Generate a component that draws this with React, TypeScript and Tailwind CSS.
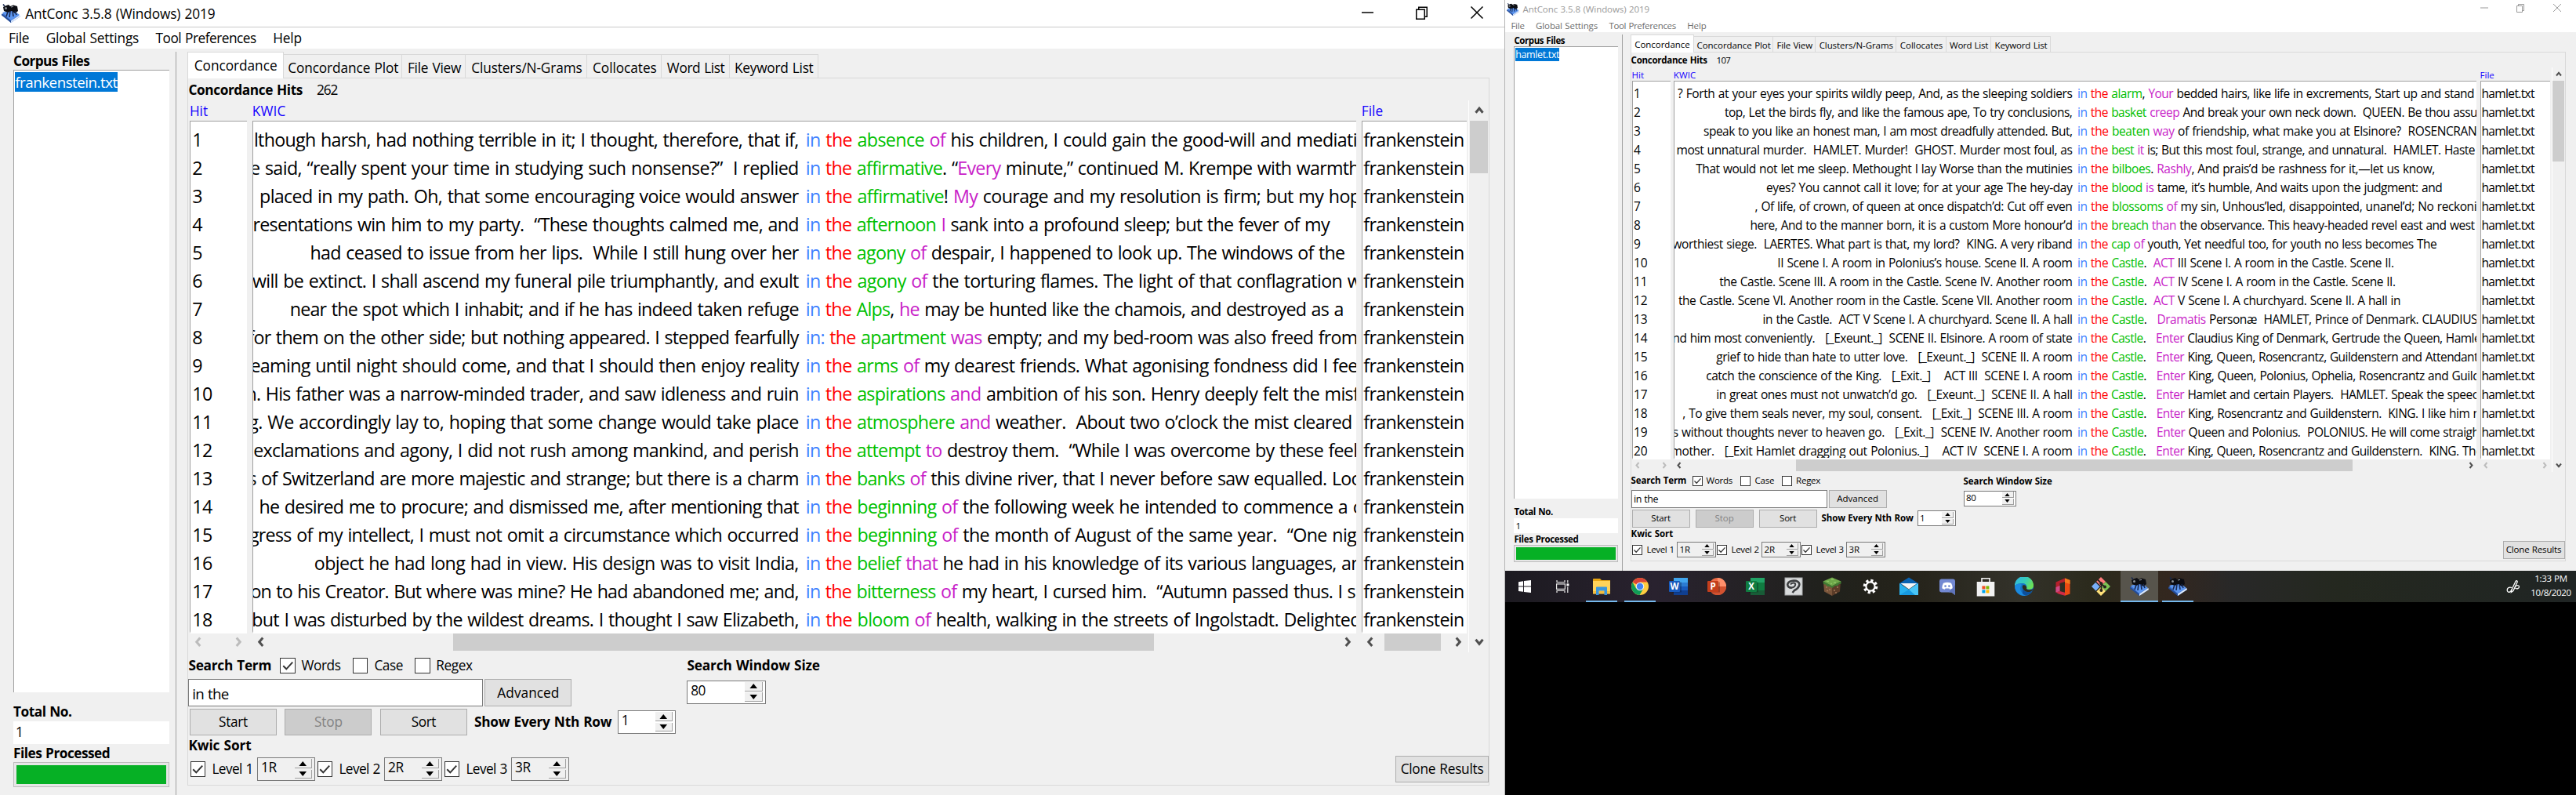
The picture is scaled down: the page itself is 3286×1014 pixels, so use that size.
import { useLayoutEffect, useRef, type ReactNode } from "react";

type Hit = [left: string, start: number, word: string, gap: string, next: string, rest: string, end: number, first?: string];

const FRANKENSTEIN: Hit[] = [
  ["lthough harsh, had nothing terrible in it; I thought, therefore, that if,", 216, "absence", " ", "of", " his children, I could gain the good-will and mediati", 1154],
  ["e said, “really spent your time in studying such nonsense?”  I replied", 212.7, "affirmative", ". “", "Every", " minute,” continued M. Krempe with warmth", 1156],
  ["placed in my path. Oh, that some encouraging voice would answer", 220.8, "affirmative", "! ", "My", " courage and my resolution is firm; but my hop", 1157],
  ["resentations win him to my party.  “These thoughts calmed me, and", 215, "afternoon", " ", "I", " sank into a profound sleep; but the fever of my", 1130.6],
  ["had ceased to issue from her lips.  While I still hung over her", 263.7, "agony", " ", "of", " despair, I happened to look up. The windows of the", 1143.7],
  ["will be extinct. I shall ascend my funeral pile triumphantly, and exult", 214.7, "agony", " ", "of", " the torturing flames. The light of that conflagration w", 1157.5],
  ["near the spot which I inhabit; and if he has indeed taken refuge", 246.5, "Alps", ", ", "he", " may be hunted like the chamois, and destroyed as a", 1142.5],
  ["for them on the other side; but nothing appeared. I stepped fearfully", 211, "apartment", " ", "was", " empty; and my bed-room was also freed from", 1154.5, "in: "],
  ["eaming until night should come, and that I should then enjoy reality", 213, "arms", " ", "of", " my dearest friends. What agonising fondness did I fee", 1154.5],
  ["n. His father was a narrow-minded trader, and saw idleness and ruin", 209, "aspirations", " ", "and", " ambition of his son. Henry deeply felt the misf", 1155.5],
  ["g. We accordingly lay to, hoping that some change would take place", 211.5, "atmosphere", " ", "and", " weather.  About two o’clock the mist cleared", 1149.8],
  ["exclamations and agony, I did not rush among mankind, and perish", 215.5, "attempt", " ", "to", " destroy them.  “While I was overcome by these feel", 1154.3],
  ["s of Switzerland are more majestic and strange; but there is a charm", 211, "banks", " ", "of", " this divine river, that I never before saw equalled. Loo", 1158],
  ["he desired me to procure; and dismissed me, after mentioning that", 220.4, "beginning", " ", "of", " the following week he intended to commence a c", 1157.5],
  ["gress of my intellect, I must not omit a circumstance which occurred", 212, "beginning", " ", "of", " the month of August of the same year.  “One nig", 1153.5],
  ["object he had long had in view. His design was to visit India,", 267.3, "belief", " ", "that", " he had in his knowledge of its various languages, an", 1158],
  ["on to his Creator. But where was mine? He had abandoned me; and,", 213, "bitterness", " ", "of", " my heart, I cursed him.  “Autumn passed thus. I s", 1152.7],
  ["but I was disturbed by the wildest dreams. I thought I saw Elizabeth,", 214.3, "bloom", " ", "of", " health, walking in the streets of Ingolstadt. Delighted", 1157.3],
];

const HAMLET: Hit[] = [
  ["? Forth at your eyes your spirits wildly peep, And, as the sleeping soldiers", 219.5, "alarm", ", ", "Your", " bedded hairs, like life in excrements, Start up and stand", 1235.5],
  ["top, Let the birds fly, and like the famous ape, To try conclusions,", 279.3, "basket", " ", "creep", " And break your own neck down.  QUEEN. Be thou assu", 1239.5],
  ["speak to you like an honest man, I am most dreadfully attended. But,", 252.5, "beaten", " ", "way", " of friendship, what make you at Elsinore?  ROSENCRAN", 1238.6],
  ["most unnatural murder.  HAMLET. Murder!  GHOST. Murder most foul, as", 218, "best", " ", "it", " is; But this most foul, strange, and unnatural.  HAMLET. Haste", 1236.4],
  ["That would not let me sleep. Methought I lay Worse than the mutinies", 242.7, "bilboes", ". ", "Rashly", ", And prais’d be rashness for it,—let us know,", 1185.3],
  ["eyes? You cannot call it love; for at your age The hey-day", 332.4, "blood", " ", "is", " tame, it’s humble, And waits upon the judgment: and", 1194.7],
  [", Of life, of crown, of queen at once dispatch’d: Cut off even", 318, "blossoms", " ", "of", " my sin, Unhous’led, disappointed, unanel’d; No reckoni", 1238.6],
  ["here, And to the manner born, it is a custom More honour’d", 312, "breach", " ", "than", " the observance. This heavy-headed revel east and west", 1236],
  ["worthiest siege.  LAERTES. What part is that, my lord?  KING. A very riband", 212.8, "cap", " ", "of", " youth, Yet needful too, for youth no less becomes The", 1187.6],
  ["II Scene I. A room in Polonius’s house. Scene II. A room", 346.7, "Castle", ".  ", "ACT", " III Scene I. A room in the Castle. Scene II.", 1133],
  ["the Castle. Scene III. A room in the Castle. Scene IV. Another room", 272.6, "Castle", ".  ", "ACT", " IV Scene I. A room in the Castle. Scene II.", 1135],
  ["the Castle. Scene VI. Another room in the Castle. Scene VII. Another room", 220.4, "Castle", ".  ", "ACT", " V Scene I. A churchyard. Scene II. A hall in", 1141.4],
  ["in the Castle.  ACT V Scene I. A churchyard. Scene II. A hall", 328, "Castle", ".   ", "Dramatis", " Personæ  HAMLET, Prince of Denmark. CLAUDIUS", 1239.5],
  ["nd him most conveniently.   [_Exeunt._]  SCENE II. Elsinore. A room of state", 212.8, "Castle", ".   ", "Enter", " Claudius King of Denmark, Gertrude the Queen, Hamle", 1243.6],
  ["grief to hide than hate to utter love.   [_Exeunt._]  SCENE II. A room", 268.6, "Castle", ".   ", "Enter", " King, Queen, Rosencrantz, Guildenstern and Attendant", 1240.5],
  ["catch the conscience of the King.   [_Exit._]    ACT III  SCENE I. A room", 255.6, "Castle", ".   ", "Enter", " King, Queen, Polonius, Ophelia, Rosencrantz and Guild", 1242.6],
  ["in great ones must not unwatch’d go.   [_Exeunt._]  SCENE II. A hall", 268.6, "Castle", ".   ", "Enter", " Hamlet and certain Players.  HAMLET. Speak the speec", 1240],
  [", To give them seals never, my soul, consent.   [_Exit._]  SCENE III. A room", 225.7, "Castle", ".   ", "Enter", " King, Rosencrantz and Guildenstern.  KING. I like him n", 1243],
  ["s without thoughts never to heaven go.   [_Exit._]  SCENE IV. Another room", 213.2, "Castle", ".   ", "Enter", " Queen and Polonius.  POLONIUS. He will come straigh", 1242],
  ["mother.   [_Exit Hamlet dragging out Polonius._]    ACT IV  SCENE I. A room", 211, "Castle", ".   ", "Enter", " King, Queen, Rosencrantz and Guildenstern.  KING. The", 1245.5],
];

/* A run of text whose tracking is adjusted until it spans exactly `w` pixels. */
function Fit({ w, children, className = "" }: { w: number; children: ReactNode; className?: string }) {
  const box = useRef<HTMLSpanElement>(null);
  const run = useRef<HTMLSpanElement>(null);
  useLayoutEffect(() => {
    const b = box.current!;
    const r = run.current!;
    r.style.letterSpacing = "0px";
    const natural = (r.getBoundingClientRect().width / b.getBoundingClientRect().width) * w;
    const n = (r.textContent ?? "").length;
    r.style.letterSpacing = `${(w - natural) / n}px`;
  });
  return (
    <span ref={box} className={`inline-block shrink-0 whitespace-pre ${className}`} style={{ width: w }}>
      <span ref={run} className="inline-block whitespace-pre [word-spacing:0.05em]">{children}</span>
    </span>
  );
}

function Chevron({ dir, dim = false }: { dir: "left" | "right" | "up" | "down"; dim?: boolean }) {
  const d = {
    left: "M5.5 1 L2.5 4.5 L5.5 8",
    right: "M2.5 1 L5.5 4.5 L2.5 8",
    up: "M1 6.5 L4 2.8 L7 6.5",
    down: "M1 2.5 L4 6.2 L7 2.5",
  }[dir];
  return (
    <svg width="8" height="9" viewBox="0 0 8 9" className="shrink-0">
      <path d={d} fill="none" stroke={dim ? "#bcbcbc" : "#505050"} strokeWidth="2" />
    </svg>
  );
}

function AntIcon({ size }: { size: number }) {
  return (
    <svg width={size} height={size} viewBox="0 0 24 24" className="shrink-0">
      <path d="M0 13 L13 8 L24 16 L12 24 Z" fill="#3d6fc8" />
      <path d="M1 11 L14 7 L23 14 L12 21 Z" fill="#5b95f0" />
      <path d="M12 24 L24 16 L23.4 14 L12 21.4 Z" fill="#dce9fb" />
      <path d="M0 12.6 L12 21.6 L12 24 L0 14.4 Z" fill="#234a94" />
      <path d="M3 9 L2 4 L6 2 L9 1 L11 3 L15 1.6 L20 3 L21 9 L17 12 L13 9 L8 11 Z" fill="#0c0d12" />
      <path d="M8 10 L6 16 M11 9 L10 17 M14 9 L15 16 M17 9 L19 14 M4 3 L2 0.5" stroke="#18284e" strokeWidth="1.6" fill="none" />
      <circle cx="5.5" cy="5.5" r="1.5" fill="#8c9299" />
      <path d="M12 4 L15 3.4" stroke="#9aa0a8" strokeWidth="1" />
    </svg>
  );
}

function Check({ on = false }: { on?: boolean }) {
  return (
    <span className="flex h-[13px] w-[13px] shrink-0 items-center justify-center border border-[#333] bg-white">
      {on && (
        <svg width="11" height="11" viewBox="0 0 11 11">
          <path d="M1.5 5.5 L4.2 8.2 L9.5 2.4" fill="none" stroke="#333" strokeWidth="1.3" />
        </svg>
      )}
    </span>
  );
}

function SpinArrow({ up = false }: { up?: boolean }) {
  return (
    <span className="flex h-[7.8px] w-[15px] items-center justify-center border-r border-b border-[#a0a0a0] bg-[#f0f0f0]">
      <svg width="7" height="4" viewBox="0 0 7 4">
        <path d={up ? "M0.3 4 L3.5 0 L6.7 4 Z" : "M0.3 0 L3.5 4 L6.7 0 Z"} fill="#000" />
      </svg>
    </span>
  );
}

function Spin({ value, w, tw, gray = false }: { value: string; w: number; tw: number; gray?: boolean }) {
  return (
    <span
      className={`flex h-[20px] shrink-0 items-center justify-between border border-[#7a7a7a] pr-[2px] pl-[2.5px] ${gray ? "bg-[#f0f0f0]" : "bg-white"}`}
      style={{ width: w }}
    >
      <Fit w={tw} className="-mt-[2px] leading-[15px]">{value}</Fit>
      <span className="flex flex-col gap-[1px]">
        <SpinArrow up />
        <SpinArrow />
      </span>
    </span>
  );
}

function Button({ label, w, tw, disabled = false }: { label: string; w: number; tw: number; disabled?: boolean }) {
  return (
    <span
      className={`flex h-[23px] shrink-0 items-center justify-center border border-[#adadad] ${disabled ? "bg-[#cccccc] text-[#838383]" : "bg-[#e1e1e1]"}`}
      style={{ width: w }}
    >
      <Fit w={tw} className="pt-[0.5px]">{label}</Fit>
    </span>
  );
}

const TABS: [string, number, number][] = [
  ["Concordance Plot", 101, 94.2],
  ["File View", 54, 45.5],
  ["Clusters/N-Grams", 103.2, 94.2],
  ["Collocates", 63.4, 54.5],
  ["Word List", 57.6, 49],
  ["Keyword List", 75.3, 67],
];

const LEVELS: [string, string][] = [["Level 1", "1R"], ["Level 2", "2R"], ["Level 3", "3R"]];

interface WindowProps {
  active: boolean;
  corpus: string;
  corpusW: number;
  count: string;
  hits: Hit[];
  node: number;
  contextEnd: number;
  file: string;
  fileW: number;
}

function AntConcWindow({ active, corpus, corpusW, count, hits, node, contextEnd, file, fileW }: WindowProps) {
  return (
    <div className="flex h-full w-full flex-col bg-white text-[11.5px] leading-[16px] text-black">
      <div className={`flex h-[23.5px] shrink-0 items-center justify-between ${active ? "border-b border-[#c8c8c8] pl-[1px]" : "pl-[2px] text-[#999]"}`}>
        <div className="flex items-center gap-[4.5px]">
          <AntIcon size={16} />
          <Fit w={161.5} className={active ? "mt-px" : ""}>AntConc 3.5.8 (Windows) 2019</Fit>
        </div>
        <svg width="120" height="12" viewBox="0 0 120 12" className={active ? "mr-[14px] mb-px" : "mr-[14.5px] mb-[3px]"} fill="none" stroke={active ? "#000" : "#999"} strokeWidth="1">
          <path d="M12 6 H22" />
          <path d="M58.5 3.5 h7 v8 h-7 Z M60.5 3.5 v-2 h7 v8 h-2" />
          <path d="M105 1 L115 11 M115 1 L105 11" />
        </svg>
      </div>
      <div className={`flex h-[17.8px] shrink-0 items-center pt-[0.5px] pl-[7.4px] ${active ? "" : "text-[#6d6d6d]"}`}>
        <Fit w={17.4} className="mr-[14.3px]">File</Fit>
        <Fit w={79} className="mr-[14.3px]">Global Settings</Fit>
        <Fit w={85.5} className="mr-[14.3px]">Tool Preferences</Fit>
        <Fit w={24.5}>Help</Fit>
      </div>

      <div className="flex min-h-0 flex-1 bg-[#f0f0f0]">
        <aside className="mt-[2.7px] flex w-[150px] shrink-0 flex-col border-r border-[#a0a0a0] pr-[5.5px] pl-[11.4px]">
          <Fit w={64.7} className="h-[15.5px] font-bold">Corpus Files</Fit>
          <div className="min-h-0 flex-1 border-t border-l border-[#a0a0a0] bg-white pt-px pl-[0.8px]">
            <Fit w={corpusW} className="h-[17px] bg-[#0078d7] text-[12.5px] leading-[17px] text-white">{corpus}</Fit>
          </div>
          <div className="flex h-[25px] shrink-0 items-end">
            <Fit w={49.5} className="font-bold">Total No.</Fit>
          </div>
          <div className="h-[19px] shrink-0 bg-white pl-[2px] leading-[19px]">1</div>
          <Fit w={82} className="h-[15.3px] font-bold">Files Processed</Fit>
          <div className="mb-[11.3px] h-[21.4px] shrink-0 border border-[#bcbcbc] bg-[#e6e6e6] p-[2px]">
            <div className="h-full bg-[#06b025]" />
          </div>
        </aside>

        <main className="mr-[13.5px] mb-[12.5px] ml-[9.6px] flex min-w-0 flex-1 flex-col pt-[3px]">
          <div className="flex h-[21.7px] shrink-0 items-end">
            <div className="z-10 -mb-px flex h-[22.7px] w-[81.7px] items-start justify-center border border-b-0 border-[#d9d9d9] bg-white pt-[3.3px]">
              <Fit w={70.5}>Concordance</Fit>
            </div>
            {TABS.map(([label, w, tw]) => (
              <div key={label} className="flex h-[19.7px] items-center justify-center border-t border-r border-[#d9d9d9] pt-[3px] pl-[0.8px]" style={{ width: w }}>
                <Fit w={tw}>{label}</Fit>
              </div>
            ))}
          </div>

          <div className="flex min-h-0 flex-1 flex-col border border-[#d9d9d9]">
            <div className="flex h-[19px] shrink-0 items-center pt-[1px]">
              <Fit w={97} className="mr-[12px] font-bold">Concordance Hits</Fit>
              <Fit w={17.5}>{count}</Fit>
            </div>

            <div className="flex min-h-0 flex-1 pl-[1px]">
              <Column title="Hit" tw={15.5} className="w-[49px]" bar={<><Chevron dir="left" dim /><Chevron dir="right" dim /></>}>
                {hits.map((_, i) => (
                  <div key={i} className="h-[24px] pl-[1.5px] leading-[24px] tracking-[-0.3px]">{i + 1}</div>
                ))}
              </Column>
              <div className="w-[4.2px] shrink-0" />
              <Column
                title="KWIC"
                tw={28.6}
                className="min-w-0 flex-1"
                bar={
                  <>
                    <Chevron dir="left" />
                    <div className="h-full bg-[#cdcdcd]" style={active ? { width: 596, marginLeft: 158, marginRight: 159 } : { width: 710, marginLeft: 144, marginRight: 146 }} />
                    <Chevron dir="right" />
                  </>
                }
              >
                {hits.map(([left, start, word, gap, next, rest, end, first], i) => (
                  <div key={i} className="flex h-[24px] leading-[24px]">
                    <div className="flex shrink-0 justify-end" style={{ width: contextEnd - 215.2, marginRight: node - contextEnd }}>
                      <Fit w={contextEnd - start}>{left}</Fit>
                    </div>
                    <Fit w={end - node}>
                      <span className="text-[#4080ff]">{first ?? "in "}</span>
                      <span className="text-[#ff0000]">the </span>
                      <span className="text-[#00c000]">{word}</span>
                      <span>{gap}</span>
                      <span className="text-[#c81ec8]">{next}</span>
                      <span>{rest}</span>
                    </Fit>
                  </div>
                ))}
              </Column>
              <div className="w-[4.5px] shrink-0" />
              <Column
                title="File"
                tw={18.3}
                className="w-[89.5px]"
                bar={
                  active ? (
                    <><Chevron dir="left" /><div className="mr-[2px] h-full w-[48px] bg-[#cdcdcd]" /><Chevron dir="right" /></>
                  ) : (
                    <><Chevron dir="left" dim /><Chevron dir="right" dim /></>
                  )
                }
              >
                {hits.map((_, i) => (
                  <div key={i} className="h-[24px] pl-[1px] leading-[24px]">
                    <Fit w={fileW}>{file}</Fit>
                  </div>
                ))}
              </Column>
              <div className="ml-[1.5px] flex w-[17px] shrink-0 flex-col items-center border-l border-white pt-[4px]">
                <Chevron dir="up" />
                <div className="mt-[4px] w-[15.3px] bg-[#cdcdcd]" style={{ height: active ? 45 : 103 }} />
                <div className="flex-1" />
                <Chevron dir="down" />
                <div className="h-[4px]" />
              </div>
            </div>

            <div className="flex h-[113px] shrink-0 flex-col">
              <div className="flex h-[46px]">
                <div className="w-[424px] shrink-0">
                  <div className="flex h-[23px] items-center">
                    <Fit w={70.5} className="mr-[7.5px] pt-[0.5px] font-bold">Search Term</Fit>
                    <Check on />
                    <Fit w={33.5} className="mr-[10px] ml-[5px] pt-[0.5px]">Words</Fit>
                    <Check />
                    <Fit w={24.5} className="mr-[10px] ml-[5.5px] pt-[0.5px]">Case</Fit>
                    <Check />
                    <Fit w={31} className="ml-[5px] pt-[0.5px]">Regex</Fit>
                  </div>
                  <div className="flex h-[23px] gap-[1.5px]">
                    <div className="flex w-[250.5px] items-center border border-[#7a7a7a] bg-white pt-[2px] pl-[2.5px]">
                      <Fit w={31} className="text-[12.5px]">in the</Fit>
                    </div>
                    <Button label="Advanced" w={74} tw={52.7} />
                  </div>
                </div>
                <div>
                  <Fit w={113} className="block h-[24px] leading-[23px] font-bold">Search Window Size</Fit>
                  <Spin value="80" w={67} tw={12.5} />
                </div>
              </div>
              <div className="mt-[2px] flex h-[23px] items-center pl-[1px]">
                <Button label="Start" w={74} tw={24.5} />
                <div className="w-[7px]" />
                <Button label="Stop" w={74} tw={24} disabled />
                <div className="w-[7px]" />
                <Button label="Sort" w={74} tw={21} />
                <Fit w={117} className="mr-[5px] ml-[6px] font-bold">Show Every Nth Row</Fit>
                <Spin value="1" w={49.5} tw={5.5} />
              </div>
              <div className="flex h-[17px] items-center">
                <Fit w={53.5} className="font-bold">Kwic Sort</Fit>
              </div>
              <div className="flex h-[23px] items-center justify-between pl-[1.5px]">
                <div className="flex items-center">
                  {LEVELS.map(([label, value]) => (
                    <div key={label} className="flex w-[108px] items-center">
                      <Check on />
                      <Fit w={35} className="mr-[3.5px] ml-[5.5px] pt-[0.5px]">{label}</Fit>
                      <Spin value={value} w={49.5} tw={13.5} gray />
                    </div>
                  ))}
                </div>
                <Button label="Clone Results" w={79} tw={70.5} />
              </div>
            </div>
          </div>
        </main>
      </div>
    </div>
  );
}

function Column({ title, tw, className, bar, children }: { title: string; tw: number; className: string; bar: ReactNode; children: ReactNode }) {
  return (
    <div className={`flex shrink-0 flex-col ${className}`}>
      <Fit w={tw} className="h-[17px] leading-[19px] text-[#1400ff]">{title}</Fit>
      <div className="min-h-0 flex-1 overflow-hidden border-t border-b-[2.5px] border-l border-t-[#a0a0a0] border-b-white border-l-[#a0a0a0] bg-white pt-[3.5px] text-[15.5px]">
        {children}
      </div>
      <div className="flex h-[16px] shrink-0 items-center justify-between px-[3.5px] pb-[1px]">{bar}</div>
    </div>
  );
}

function OfficeTile({ letter, shades, round = false }: { letter: string; shades: string[]; round?: boolean }) {
  return (
    <svg width="24" height="24" viewBox="0 0 24 24">
      {round ? (
        <>
          <circle cx="13" cy="12" r="11" fill={shades[1]} />
          <path d="M13 1 A11 11 0 0 1 24 12 H13 Z" fill={shades[0]} />
          <path d="M2 12 A11 11 0 0 0 24 12 Z" fill={shades[2]} />
        </>
      ) : (
        <>
          <rect x="6" y="1" width="18" height="22" fill={shades[1]} />
          <rect x="6" y="1" width="18" height="6" fill={shades[0]} />
          <rect x="6" y="12" width="18" height="6" fill={shades[2]} />
          <rect x="6" y="17" width="18" height="6" fill={shades[3]} />
        </>
      )}
      <rect x="4" y="6.5" width="12" height="13" fill="#000" opacity="0.25" />
      <rect x="0" y="5" width="14" height="14" rx="1" fill={shades[4]} />
      <text x="7" y="16" textAnchor="middle" fontSize="11.5" fontWeight="700" fontFamily="Open Sans, sans-serif" fill="#fff">{letter}</text>
    </svg>
  );
}

function Taskbar() {
  const items: { icon: ReactNode; mark?: "open" | "focus" }[] = [
    {
      icon: (
        <svg width="16" height="16" viewBox="0 0 16 16" fill="#fff">
          <path d="M0 2.2 L6 1.3 V7.5 H0 Z M7 1.1 L16 0 V7.5 H7 Z M0 8.5 H6 V14.8 L0 13.9 Z M7 8.5 H16 V16 L7 14.9 Z" />
        </svg>
      ),
    },
    {
      icon: (
        <svg width="17" height="16" viewBox="0 0 17 16" fill="none" stroke="#e8e8e8" strokeWidth="1.2">
          <path d="M1 0 V2.5 H11 V0 M1 16 V13.5 H11 V16 M0.6 4.8 H11.4 V11.4 H0.6 Z M14.8 0 V3.5 M14.8 8.5 V16" />
          <rect x="13.4" y="4.4" width="3" height="3" fill="#fff" stroke="none" />
        </svg>
      ),
    },
    {
      mark: "open",
      icon: (
        <svg width="24" height="22" viewBox="0 0 24 22">
          <path d="M1 2 Q1 1 2 1 H10 L12 3 H23 V8 H1 Z" fill="#e8a512" />
          <rect x="1" y="4" width="22" height="16.5" fill="#ffd35a" />
          <rect x="1" y="17" width="22" height="2.5" fill="#f3bc3c" />
          <path d="M5 22 V12.5 Q5 11.5 6 11.5 H18 Q19 11.5 19 12.5 V22 H15.5 V16.5 H8.5 V22 Z" fill="#3a96dd" />
        </svg>
      ),
    },
    {
      mark: "open",
      icon: (
        <svg width="24" height="24" viewBox="0 0 24 24">
          <circle cx="12" cy="12" r="11" fill="#ffcd40" />
          <path d="M12 12 L2.5 6.5 A11 11 0 0 1 21.5 6.5 H12 Z" fill="#db4437" />
          <path d="M2.5 6.5 A11 11 0 0 0 11.5 23 L16.5 14.5 L12 12 L7 14.6 Z" fill="#0f9d58" />
          <circle cx="12" cy="12" r="5.3" fill="#f1f1f1" />
          <circle cx="12" cy="12" r="4.2" fill="#4285f4" />
        </svg>
      ),
    },
    { icon: <OfficeTile letter="W" shades={["#41a5ee", "#2b7cd3", "#185abd", "#103f91", "#185abd"]} /> },
    { icon: <OfficeTile letter="P" round shades={["#ff8f6b", "#ed6c47", "#d35230", "#d35230", "#c43e1c"]} /> },
    { icon: <OfficeTile letter="X" shades={["#21a366", "#107c41", "#107c41", "#185c37", "#107c41"]} /> },
    {
      icon: (
        <svg width="24" height="24" viewBox="0 0 24 24">
          <rect x="1" y="1" width="22" height="22" fill="#d9dbdc" stroke="#a9acae" />
          <path d="M10 13.5 C6.5 14 4 12 4.3 9.3 C5 5 13 3.4 17.3 5.8 C21.5 8.6 18.5 14.5 13 17 L10.5 20" fill="none" stroke="#3b3d3f" strokeWidth="2.6" />
          <path d="M8 9.6 C9.5 7 14 6.8 14.2 9.2 C14.2 11.5 12 13 10 13.5" fill="none" stroke="#3b3d3f" strokeWidth="2" />
        </svg>
      ),
    },
    {
      icon: (
        <svg width="24" height="24" viewBox="0 0 24 24">
          <path d="M1 6 L12 11 V24 L2 18.5 Z" fill="#79553a" />
          <path d="M23 6 L12 11 V24 L22 18.5 Z" fill="#5b3c28" />
          <path d="M12 0.5 L23.5 5.5 L12 11.5 L0.5 5.5 Z" fill="#6fa84a" />
          <path d="M0.5 5.5 L12 11.5 L23.5 5.5 V8.5 L21 9 L19 11 L16 11 L12 14 L9 12 L6 12 L4 9.5 L1 9 Z" fill="#3f7a33" />
          <path d="M5 5.5 h3 M11 3 h3 M14 7 h3 M10 8.5 h2" stroke="#8cc466" strokeWidth="1.4" />
          <path d="M4 13 h2 M8 16 h2 M5 17.5 h2 M14 17 h2 M18 13 h2 M16 20 h2" stroke="#a2785a" strokeWidth="1.6" />
        </svg>
      ),
    },
    {
      icon: (
        <svg width="20" height="20" viewBox="0 0 20 20">
          <circle cx="10" cy="10" r="7.6" fill="none" stroke="#fff" strokeWidth="3.4" strokeDasharray="3.2 2.77" />
          <circle cx="10" cy="10" r="5.6" fill="none" stroke="#fff" strokeWidth="2.2" />
        </svg>
      ),
    },
    {
      icon: (
        <svg width="24" height="24" viewBox="0 0 24 24">
          <path d="M0 8 L12 0.5 L24 8 V10 H0 Z" fill="#0a62b0" />
          <path d="M0 8 L12 16 L24 8 V23 H0 Z" fill="#28b0ee" />
          <path d="M1.5 8 H22.5 L12 15.5 Z" fill="#f4f6f8" />
          <path d="M12 16 L24 8 V23 H18 Z" fill="#49c5f6" />
          <path d="M0 23 L12 16 L20 23 Z" fill="#1799e0" />
        </svg>
      ),
    },
    {
      icon: (
        <svg width="20" height="21" viewBox="0 0 20 21">
          <path d="M2.4 0.5 H17.6 Q20 0.5 20 3 V21 L15.4 17.4 H2.4 Q0 17.4 0 15 V3 Q0 0.5 2.4 0.5 Z" fill="#7389d2" />
          <path d="M12 17.4 L20 8 V21 L15.4 17.4 Z" fill="#5f74bb" />
          <path d="M5 5.8 Q10 3.6 15 5.8 Q16.8 9 16.7 12.2 Q15 13.6 13.2 13.7 L12.4 12.6 H7.6 L6.8 13.7 Q5 13.6 3.3 12.2 Q3.2 9 5 5.8 Z" fill="#fff" />
          <circle cx="7.6" cy="9.6" r="1.4" fill="#7389d2" />
          <circle cx="12.4" cy="9.6" r="1.4" fill="#7389d2" />
        </svg>
      ),
    },
    {
      icon: (
        <svg width="24" height="25" viewBox="0 0 24 25">
          <path d="M7 8 V1.8 H17 V8" fill="none" stroke="#f2f2f2" strokeWidth="1.6" />
          <path d="M0.7 6 H23.3 V24.5 H0.7 Z" fill="#f2f2f2" />
          <rect x="7.4" y="11.4" width="4" height="4" fill="#f25022" />
          <rect x="12.4" y="11.4" width="4" height="4" fill="#7fba00" />
          <rect x="7.4" y="16.4" width="4" height="4" fill="#00a4ef" />
          <rect x="12.4" y="16.4" width="4" height="4" fill="#ffb900" />
        </svg>
      ),
    },
    {
      icon: (
        <svg width="24" height="24" viewBox="0 0 24 24">
          <defs>
            <linearGradient id="edgeTop" x1="0" y1="0" x2="1" y2="0.5">
              <stop offset="0" stopColor="#2fb5ec" />
              <stop offset="0.6" stopColor="#38cdb5" />
              <stop offset="1" stopColor="#6ae05a" />
            </linearGradient>
          </defs>
          <circle cx="12" cy="12" r="12" fill="#1673c4" />
          <path d="M0 11 A12 12 0 0 1 24 11 C24 16 18 16.5 15 15 C16 13 15.5 8.5 11 8 C6 7.5 1.5 9 0 11 Z" fill="url(#edgeTop)" />
          <path d="M9 10 C5 14 8 21 14 23.6 C8 24.6 0.8 20.5 0.2 12 C2 8 7 7.5 9 10 Z" fill="#1b8be0" />
          <path d="M10 14 C11 18.5 16 20.5 22.3 18 C19 23.5 13 24.8 10 21 Z" fill="#0d4f9c" />
          <path d="M10.5 10.5 C8.5 12.5 11 18.5 16.5 19 C19.5 19.2 21.5 18 22.6 17.2 L24.5 15 C21 16.8 16 16.8 15 15 C15.8 13 14 9 10.5 10.5 Z" fill="#2c2c1f" />
        </svg>
      ),
    },
    {
      icon: (
        <svg width="19" height="23" viewBox="0 0 19 23">
          <path d="M0.5 5.5 L12 0.5 V5 L5.5 7 V17 L0.5 18.5 Z" fill="#b5202c" />
          <path d="M12 0.5 L18.5 3 V20.5 L12 22.7 Z" fill="#eb4a12" />
          <path d="M12 0.5 L18.5 3 V8 L12 6 Z" fill="#f57a1c" />
          <path d="M0.5 18.5 L5.5 17 L12 18.8 V22.7 L4 20.5 Z" fill="#d12a45" />
          <path d="M0.5 12 L5.5 10 V17 L0.5 18.5 Z" fill="#cf4a86" />
        </svg>
      ),
    },
    {
      icon: (
        <svg width="24" height="24" viewBox="0 0 24 24">
          <path d="M12 0 L18 6 L12 12 L6 6 Z" fill="#ff7b7b" />
          <path d="M24 12 L18 18 L12 12 L18 6 Z" fill="#7cc354" />
          <path d="M12 24 L6 18 L12 12 L18 18 Z" fill="#ffe27a" />
          <path d="M0 12 L6 6 L12 12 L6 18 Z" fill="#78aef8" />
          <path d="M8 3.5 L12.5 8 V17 M12.5 9 L17 12.5" stroke="#26231c" strokeWidth="1.8" fill="none" />
          <circle cx="12.4" cy="8.2" r="2" fill="#26231c" />
          <circle cx="12.4" cy="17" r="2" fill="#26231c" />
          <circle cx="17" cy="12.6" r="2" fill="#26231c" />
          <path d="M5.2 6 L11.5 12.2 L5.6 18.4" stroke="#26231c" strokeWidth="1.2" fill="none" />
        </svg>
      ),
    },
    { mark: "focus", icon: <AntIcon size={24} /> },
    { mark: "open", icon: <AntIcon size={24} /> },
  ];
  return (
    <div className="flex h-[40px] items-stretch justify-between bg-[linear-gradient(90deg,#1c1a20_0%,#29222f_14%,#20211c_30%,#25231a_38%,#33322a_48%,#2b2a1c_55%,#33271f_62%,#282828_68%,#24281f_78%,#202524_100%)]">
      <div className="flex">
        {items.map((item, i) => (
          <div
            key={i}
            className={`flex h-[40px] w-[49.05px] flex-col items-center ${i === 16 ? "bg-[#57544c] bg-clip-content px-[0.5px]" : ""}`}
          >
            <div className="flex h-[38px] items-center justify-center pt-[2px]">{item.icon}</div>
            {item.mark === "open" && <div className="h-[2px] w-[40px] bg-[#76b9ed]" />}
            {item.mark === "focus" && <div className="h-[2px] w-[48px] bg-[#76b9ed]" />}
          </div>
        ))}
      </div>
      <div className="flex items-center pr-[6px]">
        <svg width="18" height="18" viewBox="0 0 18 18" fill="none" stroke="#fff" strokeWidth="1.3" className="mr-[13px]">
          <path d="M6.5 14 L12 2.5 Q13.5 0.5 14.3 3 L9 14.5 L6.3 16.5 Z" />
          <path d="M7 10.5 C3 9 0.5 12 1.5 15 C3 17.5 6 16 7 13 M11 10 C13 6.5 16.5 7.5 16.5 9.5 C16.5 12 13 12.5 11.5 11" />
        </svg>
        <div className="-mt-[3px] flex w-[52px] flex-col items-center text-[11.5px] leading-[18px] text-white">
          <Fit w={41.5}>1:33 PM</Fit>
          <Fit w={51.5}>10/8/2020</Fit>
        </div>
      </div>
    </div>
  );
}

export default function App() {
  return (
    <div className="flex h-[1014px] w-[3286px] overflow-hidden bg-black font-['Open_Sans','Noto_Sans',sans-serif]">
      <section className="h-[1014px] w-[1920px] shrink-0 overflow-hidden border-r border-[#b4b4b4]">
        <div className="h-[680.5px] w-[1280px] [zoom:1.5]">
          <AntConcWindow
            active
            corpus="frankenstein.txt"
            corpusW={87}
            count="262"
            hits={FRANKENSTEIN}
            node={685.3}
            contextEnd={679.2}
            file="frankenstein"
            fileW={85.5}
          />
        </div>
      </section>
      <section className="flex w-[1366px] shrink-0 flex-col">
        <div className="h-[728px] w-full">
          <AntConcWindow
            active={false}
            corpus="hamlet.txt"
            corpusW={56}
            count="107"
            hits={HAMLET}
            node={729.5}
            contextEnd={722.8}
            file="hamlet.txt"
            fileW={67.5}
          />
        </div>
        <Taskbar />
      </section>
    </div>
  );
}
